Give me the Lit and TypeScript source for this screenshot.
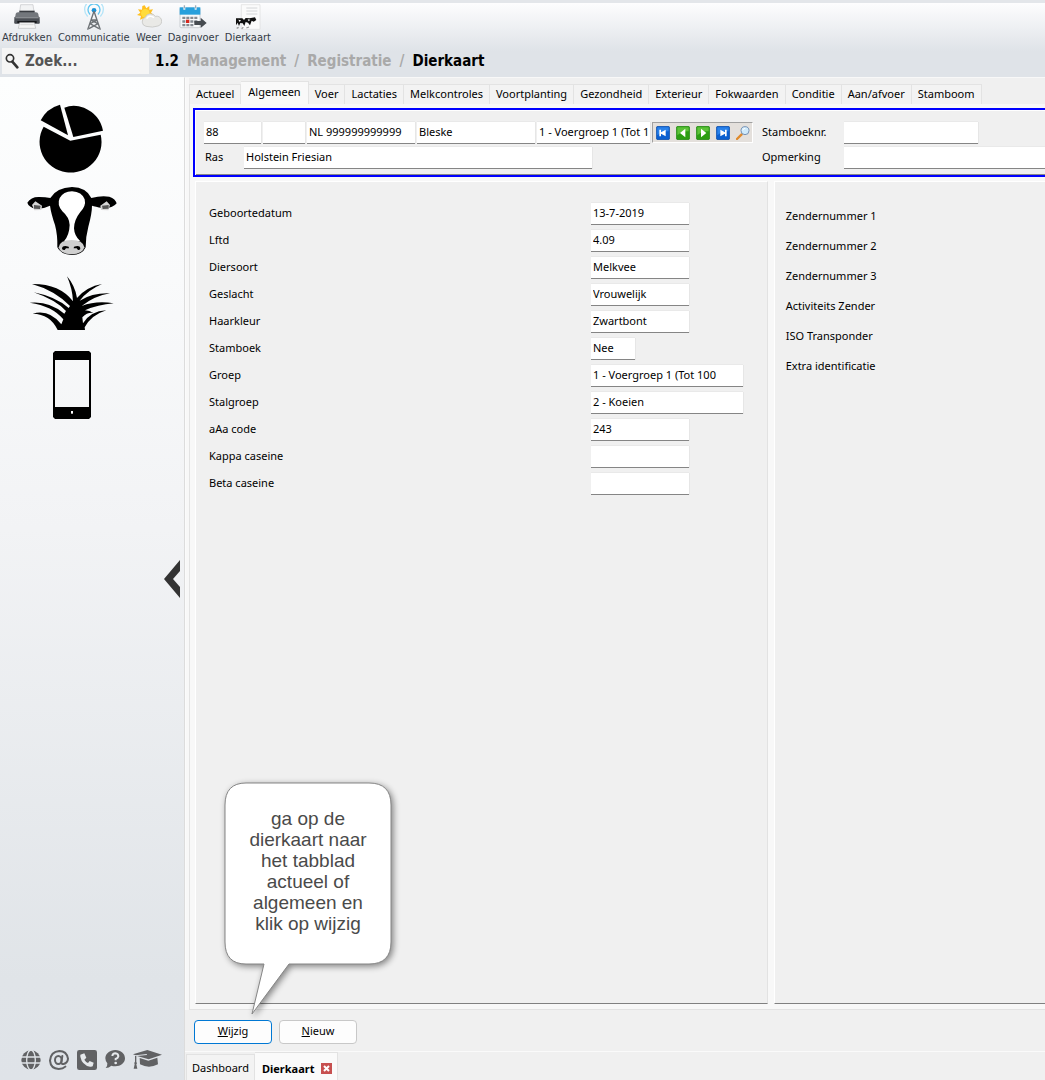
import { LitElement, html, svg, css } from "lit";
import { customElement, state } from "lit/decorators.js";

const printer = svg`<svg viewBox="0 0 78 78" width="26" height="26" aria-hidden="true">
  <path d="M20 2H57L60 24H17Z" fill="#f2f3f4" stroke="#c4c6c8" stroke-width="2"/>
  <rect x="16" y="20" width="46" height="7" fill="#3a3d42"/>
  <path d="M5 30Q6 25 12 25H66Q72 25 73 30L77 58H1Z" fill="#73777c"/>
  <rect x="1" y="38" width="76" height="21" rx="3" fill="#4b4f55"/>
  <rect x="4" y="38" width="70" height="5" fill="#898d91"/>
  <rect x="10" y="51" width="58" height="6" fill="#17191c"/>
  <path d="M17 56H61L65 73H13Z" fill="#f7f7f7" stroke="#b9bbbd" stroke-width="2"/>
  <path d="M19 62H59" stroke="#c9cacc" stroke-width="2"/></svg>`;
const antenna = svg`<svg viewBox="0 0 78 78" width="26" height="26" aria-hidden="true">
  <g fill="none" stroke-linecap="round" stroke-width="4">
  <path d="M19 36A28 28 0 1 1 59 36" stroke="#b4e4f8"/>
  <path d="M26 30A18 18 0 1 1 52 30" stroke="#62c6f0"/></g>
  <circle cx="39" cy="19" r="7" fill="#1c93d6"/>
  <path d="M39 22L20 77M39 22L58 77M31 48H47M27 59L50 48M51 59L28 48M24 74L51 59M54 74L27 59" fill="none" stroke="#6d7276" stroke-width="4"/></svg>`;
const weather = svg`<svg viewBox="0 0 78 78" width="26" height="26" aria-hidden="true">
  <path d="M26 4L31 13L40 6L40 17L51 16L45 26L53 33L43 37L46 48L35 44L28 52L23 43L12 47L15 36L3 33L13 26L6 16L18 17L19 6Z" fill="#ffc021"/>
  <circle cx="28" cy="28" r="13" fill="#ffdc3c"/>
  <path d="M30 67A14 14 0 0 1 28 40A17 17 0 0 1 58 37A14 14 0 0 1 66 66Q50 72 30 67Z" fill="#e9e9e6" stroke="#bdbdb9" stroke-width="2"/>
  <path d="M32 44Q40 31 54 41" stroke="#fff" stroke-width="5" fill="none"/></svg>`;
const calendar = svg`<svg viewBox="0 0 84 78" width="28" height="26" aria-hidden="true">
  <rect x="3" y="12" width="60" height="59" rx="3" fill="#f7f9fa" stroke="#b6bcc2" stroke-width="2"/>
  <path d="M2 10H64V32H2Z" fill="#27a0dc"/>
  <path d="M16 4V17M50 4V17" stroke="#e8f1f7" stroke-width="6"/><path d="M16 4V13M50 4V13" stroke="#66717c" stroke-width="2"/>
  <g fill="#858b92"><path d="M10 38h9v7h-9zM22 38h9v7h-9zM34 38h9v7h-9zM46 38h9v7h-9zM10 49h9v7h-9zM34 49h9v7h-9zM46 49h9v7h-9zM10 60h9v7h-9zM22 60h9v7h-9zM34 60h9v7h-9z"/></g>
  <rect x="21" y="47" width="10" height="10" fill="#d6281e"/>
  <path d="M46 51H65V41L83 57L65 72V63H46Z" fill="#464b50"/></svg>`;
const animalCard = svg`<svg viewBox="0 0 78 78" width="26" height="26" aria-hidden="true">
  <path d="M19 2H75V76H19Z" fill="#fbfbfb" stroke="#dcdcdc" stroke-width="2"/>
  <path d="M34 12H67M34 21H67M34 30H67" stroke="#d4d6d8" stroke-width="3"/>
  <path d="M3 43H22L27 48L32 42L44 43L60 40L64 48L56 53L50 50L45 64L39 56L32 54L28 66L23 58L16 57L12 66L8 56L3 64Z" fill="#111"/>
  <path d="M10 47l8 2l-4 5zM38 46l8 1l-5 5z" fill="#fff"/>
  <path d="M5 73l6-3M20 74l5-4M34 72l8-3" stroke="#999" stroke-width="4"/></svg>`;
const magnifier = svg`<svg viewBox="0 0 42 48" width="14" height="16" aria-hidden="true">
  <circle cx="15" cy="16" r="11" fill="none" stroke="#333" stroke-width="5"/>
  <path d="M22 26L37 43" stroke="#333" stroke-width="8" stroke-linecap="round"/></svg>`;

const pie = svg`<svg viewBox="117 42 195 210" width="65" height="70" aria-hidden="true">
  <path d="M131 110L211 152L302 134A93 92 0 1 1 131 110Z"/>
  <path d="M193 53Q220 42 252 53Q300 74 309 122L220 141Z"/>
  <path d="M122 91Q140 55 180 44L204 136Z"/></svg>`;
const cow = svg`<svg viewBox="78 288 270 210" width="90" height="70" aria-hidden="true">
  <path d="M148 324Q166 293 213 291Q256 292 271 324Q300 316 325 320Q344 327 347 340Q334 357 304 354Q282 350 273 347Q273 370 262 410Q254 440 254 472Q244 495 212 495Q179 494 169 472Q170 435 162 405Q150 370 147 347Q128 357 105 356Q83 352 79 338Q90 320 115 321Q133 321 148 324Z"/>
  <path d="M213 304Q243 306 251 328Q256 348 238 366Q219 390 219 415Q220 438 238 454H189Q205 435 206 405Q205 382 184 364Q167 344 176 324Q187 305 213 304Z" fill="#fff"/>
  <path d="M173 472Q176 450 212 450Q246 450 250 472Q246 492 212 493Q177 492 173 472Z" fill="#cfcfcf"/>
  <path d="M183 474Q185 465 203 470L204 475L195 475L191 480Q182 481 183 474ZM238 474Q237 465 219 470L218 475L227 475L231 480Q239 481 238 474Z"/>
  <path d="M93 345L103 334L123 347L121 360L100 361ZM327 345L317 334L298 347L300 360L322 361Z" fill="#d6d6d6"/>
  <path d="M99 345L119 347L117 357L99 356ZM323 345L303 347L305 357L323 356Z" fill="#555"/></svg>`;
const grass = svg`<svg viewBox="84 48 255 162" width="85" height="54" aria-hidden="true">
  <path d="M170 210Q148 162 95 161Q145 147 181 193L187 178Q155 138 86 128Q145 122 190 161L195 153Q163 119 98 97Q164 110 203 144L207 138Q161 91 93 72Q176 71 216 124Q214 85 198 49Q222 77 228 114Q257 80 303 72Q261 90 236 122Q275 98 327 100Q280 108 242 138Q286 121 338 130Q290 134 252 151Q266 151 277 159Q260 156 244 172L246 190Q269 153 316 151Q271 165 251 202L252 210Z"/></svg>`;
const phone = svg`<svg viewBox="0 0 114 204" width="38" height="68" aria-hidden="true">
  <path fill-rule="evenodd" d="M6 0H108L114 6V198L108 204H6L0 198V6ZM6 27V168H108V27Z"/>
  <rect x="54" y="180" width="6" height="8" fill="#fff"/></svg>`;

const globe = svg`<svg viewBox="0 0 60 60" width="20" height="20" aria-hidden="true">
  <circle cx="30" cy="30" r="29" fill="#616264"/>
  <g fill="none" stroke="#e0e4e8" stroke-width="4"><ellipse cx="30" cy="30" rx="13" ry="30"/><path d="M0 21H60M0 39H60"/></g></svg>`;
const at = svg`<svg viewBox="0 0 60 60" width="20" height="20" aria-hidden="true">
  <g fill="none" stroke="#616264" stroke-width="6" stroke-linecap="round"><ellipse cx="28" cy="30" rx="10" ry="12"/>
  <path d="M40 18L37 36Q37 43 44 42Q56 39 57 26Q53 3 31 3Q5 5 3 32Q5 56 29 57Q42 57 49 50"/></g></svg>`;
const call = svg`<svg viewBox="0 0 60 60" width="20" height="20" aria-hidden="true">
  <rect width="60" height="60" rx="7" fill="#616264"/>
  <path d="M10 14L22 10L28 23L22 29Q26 36 33 39L38 33L50 38L47 49Q44 51 39 50Q15 45 10 20Z" fill="#e6e9ec"/></svg>`;
const help = svg`<svg viewBox="0 0 60 60" width="20" height="20" aria-hidden="true">
  <path d="M31 0C48 0 60 11 60 25C60 39 47 49 31 49Q24 49 19 47Q12 54 2 54Q8 48 7 40Q1 33 1 25C1 11 14 0 31 0Z" fill="#616264"/>
  <path d="M22 18Q23 10 31 10Q40 11 40 19Q39 24 32 27V31" fill="none" stroke="#e6e9ec" stroke-width="6"/><circle cx="32" cy="39" r="4" fill="#e6e9ec"/></svg>`;
const cap = svg`<svg viewBox="0 0 87 60" width="29" height="20" aria-hidden="true">
  <path d="M43 0L87 14L47 28L12 18L42 15L41 12L8 16L0 13ZM20 24L46 32L73 23L75 43Q48 57 21 43ZM6 18H10V36Q14 40 10 43L13 56H2L5 43Q2 39 6 35Z" fill="#616264"/></svg>`;

const navIcon = (kind: string) => {
  if (kind === "zoek") {
    return svg`<svg viewBox="0 0 42 42" width="14" height="14" aria-hidden="true">
      <path d="M3 39L17 25" stroke="#e08a2c" stroke-width="7" stroke-linecap="round"/>
      <circle cx="27" cy="14" r="12" fill="#cfeafb" stroke="#7793b5" stroke-width="3"/>
      <path d="M20 13Q22 7 28 7" stroke="#fff" stroke-width="3" fill="none"/></svg>`;
  }
  const blue = kind === "eerste" || kind === "laatste";
  const glyph: Record<string, string> = {
    eerste: "M10 11H15V19L29 11V31L15 23V31H10Z",
    vorige: "M28 8V34L12 21Z",
    volgende: "M15 8V34L31 21Z",
    laatste: "M32 11H27V19L13 11V31L27 23V31H32Z",
  };
  return svg`<svg viewBox="0 0 42 42" width="14" height="14" aria-hidden="true">
    <rect x="1" y="1" width="40" height="40" rx="5" fill=${blue ? "#0a5fd0" : "#2b9e12"} stroke=${blue ? "#0a48a0" : "#1e8210"} stroke-width="2"/>
    <path d="M4 4H38V16Q20 14 4 28Z" fill=${blue ? "#2a82ea" : "#5cc238"}/>
    <path d=${glyph[kind]} fill="#fff"/></svg>`;
};

const TOOLS = [
  ["Afdrukken", printer],
  ["Communicatie", antenna],
  ["Weer", weather],
  ["Daginvoer", calendar],
  ["Dierkaart", animalCard],
] as const;

const TABS = ["Actueel", "Algemeen", "Voer", "Lactaties", "Melkcontroles", "Voortplanting", "Gezondheid",
  "Exterieur", "Fokwaarden", "Conditie", "Aan/afvoer", "Stamboom"];

const FIELDS = [
  ["Geboortedatum", "13-7-2019", "medium"],
  ["Lftd", "4.09", "medium"],
  ["Diersoort", "Melkvee", "medium"],
  ["Geslacht", "Vrouwelijk", "medium"],
  ["Haarkleur", "Zwartbont", "medium"],
  ["Stamboek", "Nee", "short"],
  ["Groep", "1 - Voergroep 1 (Tot 100", "long"],
  ["Stalgroep", "2 - Koeien", "long"],
  ["aAa code", "243", "medium"],
  ["Kappa caseine", "", "medium"],
  ["Beta caseine", "", "medium"],
];

const TRANSPONDERS = ["Zendernummer 1", "Zendernummer 2", "Zendernummer 3", "Activiteits Zender",
  "ISO Transponder", "Extra identificatie"];

@customElement("app-root")
export class AppRoot extends LitElement {
  @state() private tab = "Algemeen";

  static styles = css`
    :host {
      display: flex;
      flex-direction: column;
      min-height: 100vh;
      overflow: hidden;
      font: 11px/16px "Noto Sans", "Open Sans", sans-serif;
      color: #000;
    }
    *, *::before, *::after { box-sizing: border-box; }
    button, input { font: inherit; color: inherit; margin: 0; border-radius: 0; }
    button { background: none; border: 0; padding: 0; }
    a { color: inherit; text-decoration: none; }
    svg { display: block; flex: none; }

    .top {
      background: linear-gradient(#fdfdfe 0, #dfe3e8 48px);
      border-top: 3px solid #e3e6ea;
      height: 77px;
    }
    .tools { display: flex; gap: 6px; padding: 1px 2px 0; height: 45px; }
    .tool {
      display: flex;
      flex-direction: column;
      align-items: center;
      font: 11px/14px "DejaVu Sans Condensed", "Noto Sans", sans-serif;
      color: #333b46;
    }
    .tool svg { margin-bottom: 1px; }
    .bar {
      display: flex;
      align-items: center;
      height: 26px;
      padding-left: 2px;
      font: bold 15px/24px "DejaVu Sans Condensed", "Noto Sans", sans-serif;
    }
    .search { display: flex; align-items: center; gap: 6px; width: 147px; height: 26px; padding-left: 3px; background: #f5f5f5; }
    .search input { flex: 1; min-width: 0; border: 0; padding: 0; background: none; outline: 0; }
    .search input::placeholder { color: #555; opacity: 1; }
    .crumbs { display: flex; gap: 8px; padding-left: 6px; color: #a9a9a9; }
    .crumbs .dark { color: #000; }
    .version { color: #000; }

    .body { display: flex; flex: 1; }
    .side {
      display: flex;
      flex-direction: column;
      flex: none;
      width: 184px;
      background: linear-gradient(#fdfefe 0, #f9fafb 20%, #f2f3f5 45%, #e0e4e8 90%, #dfe3e8);
    }
    .modules { display: flex; flex: 1 1 0; flex-direction: column; gap: 12px; width: 143px; padding-top: 27px; }
    .modules a { display: flex; align-items: center; justify-content: center; height: 70px; }
    .links { display: flex; flex: 1 1 0; align-items: flex-end; gap: 8px; padding: 0 0 10px 21px; }
    .fold { align-self: flex-end; margin-bottom: 17px; padding-right: 4px; }

    .main {
      display: flex;
      flex-direction: column;
      flex: 1;
      min-width: 0;
      background: #f0f0f0;
      border-left: 1px solid #dcdcdc;
      border-top: 1px solid #f8f8f8;
    }
    .work {
      position: relative;
      display: flex;
      flex-direction: column;
      flex: 1;
      padding-left: 3px;
      border-left: 1px solid #fbfbfb;
      background: #f8f8f8;
    }
    .tabs { display: flex; align-items: flex-end; height: 26px; background: #f0f0f0; }
    .tab { height: 20px; padding: 0 6px 2px; border: 1px solid #e3e3e3; border-left-width: 0; border-bottom: 0; background: #f3f3f3; white-space: nowrap; }
    .tab:first-child { border-left-width: 1px; }
    .tab[aria-selected="true"] { height: 23px; padding: 0 7px 2px; background: #f9f9f9; }
    .page { display: flex; flex-direction: column; flex: 1; padding: 4px 0 5px 3px; border: 1px solid #e3e3e3; border-width: 0 0 1px 1px; }

    .card {
      display: grid;
      grid-template-columns: 549px 91px minmax(0, 1fr);
      row-gap: 3px;
      align-items: center;
      margin-bottom: 4px;
      padding: 12px 0 6px 9px;
      border: 2px solid #00f;
      border-right: 0;
      box-shadow: inset 1px 1px #fff, inset 0 -1px #888;
      background: #f0f0f0;
    }
    .ident { display: flex; gap: 2px; }
    .ident label { width: 38px; padding-left: 1px; line-height: 20px; }
    .card > label { padding: 0 0 2px 9px; line-height: 20px; }
    .box {
      display: block;
      height: 22px;
      min-width: 0;
      padding: 0 2px 2px;
      border: 0;
      border-bottom: 1px solid #858585;
      background: #fff;
      box-shadow: 1px 0 #e6e6e6, 0 -1px #e9e9e9;
      outline: 0;
    }
    .number { width: 57px; }
    .suffix { width: 42px; }
    .earmark { width: 108px; }
    .name { width: 118px; }
    .group { width: 113px; }
    .breed { width: 348px; }
    .herdbook { width: 134px; }
    .note { width: 100%; }
    .short { width: 44px; }
    .medium { width: 98px; }
    .long { width: 152px; }
    .steps {
      display: flex;
      align-items: center;
      gap: 6px;
      width: 101px;
      height: 21px;
      padding-left: 3px;
      border: 1px solid #a0a0a0;
      border-color: #a0a0a0 #fff #fff #a0a0a0;
      background: #e4e0dc;
    }

    .panels { display: grid; grid-template-columns: 19fr 9fr; gap: 6px; flex: 1; padding-left: 2px; }
    .panel { background: #f0f0f0; border: 1px solid #fff; border-right-color: #e2e2e2; border-bottom-color: #808080; }
    .form { display: grid; grid-template-columns: 7fr 3fr; align-content: start; row-gap: 5px; padding: 21px 12px 0 13px; }
    .form label { line-height: 20px; }
    .ids { display: flex; flex-direction: column; gap: 14px; margin: 0; padding: 26px 10px 0 11px; border-right: 0; list-style: none; white-space: nowrap; }

    .actions { display: flex; gap: 7px; padding: 10px 0 7px 9px; }
    .action { width: 78px; height: 24px; padding-bottom: 2px; border: 1px solid #c8c8c8; border-radius: 4px; background: #fdfdfd; }
    .primary { border-color: #0078d4; }

    .windows { display: flex; align-items: flex-end; height: 29px; padding-left: 1px; border-top: 1px solid #fafafa; }
    .window { display: flex; align-items: center; gap: 7px; height: 26px; padding: 0 5px; border: 1px solid #e2e2e2; border-bottom: 0; background: #f3f3f3; }
    .window.active { height: 28px; padding: 4px 5px 0 7px; border-left: 0; background: #fafafa; font-weight: bold; }
    .close { display: grid; place-items: center; width: 11px; height: 11px; background: #c75050; }

    .callout { position: absolute; left: 38px; bottom: -6px; width: 168px; height: 234px; color: #4a4a4a; font: 19px/21px "Liberation Sans", Arial, sans-serif; text-align: center; }
    .callout svg { position: absolute; left: 0; top: 0; overflow: visible; filter: drop-shadow(2px 2px 3px rgba(0, 0, 0, 0.45)); }
    .callout p { position: relative; margin: 0; padding-top: 26px; }
  `;

  render() {
    return html`
      <header class="top">
        <div class="tools">
          ${TOOLS.map(([name, icon]) => html`<button class="tool">${icon}<span>${name}</span></button>`)}
        </div>
        <div class="bar">
          <label class="search">${magnifier}<input type="search" placeholder="Zoek..." aria-label="Zoek" /></label>
          <nav class="crumbs">
            <span class="version">1.2</span>
            <a href="#management">Management</a><span>/</span>
            <a href="#registratie">Registratie</a><span>/</span>
            <a class="dark" href="#dierkaart">Dierkaart</a>
          </nav>
        </div>
      </header>
      <div class="body">
        <aside class="side">
          <nav class="modules">
            <a href="#management" aria-label="Management">${pie}</a>
            <a href="#dieren" aria-label="Dieren">${cow}</a>
            <a href="#grasland" aria-label="Grasland">${grass}</a>
            <a href="#mobiel" aria-label="Mobiel">${phone}</a>
          </nav>
          <button class="fold" aria-label="Menu inklappen">
            <svg viewBox="0 0 16 38" width="16" height="38"><path d="M16 0V11L9 19L16 27V38L0 19Z" fill="#333" /></svg>
          </button>
          <nav class="links">
            <a href="#web" aria-label="Website">${globe}</a>
            <a href="#mail" aria-label="E-mail">${at}</a>
            <a href="#telefoon" aria-label="Telefoon">${call}</a>
            <a href="#help" aria-label="Help">${help}</a>
            <a href="#cursus" aria-label="Cursus">${cap}</a>
          </nav>
        </aside>
        <main class="main">
          <section class="work">
            <div class="tabs" role="tablist">
              ${TABS.map((t) => html`<button class="tab" role="tab" aria-selected=${t === this.tab ? "true" : "false"}
                @click=${() => (this.tab = t)}>${t}</button>`)}
            </div>
            <div class="page">
              <div class="card">
                <div class="ident">
                  <input class="box number" aria-label="Nummer" .value=${"88"} />
                  <input class="box suffix" aria-label="Toevoeging" />
                  <input class="box earmark" aria-label="Levensnummer" .value=${"NL 999999999999"} />
                  <input class="box name" aria-label="Naam" .value=${"Bleske"} />
                  <input class="box group" aria-label="Voergroep" .value=${"1 - Voergroep 1 (Tot 100"} />
                  <div class="steps">
                    ${["eerste", "vorige", "volgende", "laatste", "zoek"].map((k) => html`<button aria-label=${k}>${navIcon(k)}</button>`)}
                  </div>
                </div>
                <label for="herdbook">Stamboeknr.</label>
                <input id="herdbook" class="box herdbook" />
                <div class="ident">
                  <label for="breed">Ras</label>
                  <input id="breed" class="box breed" .value=${"Holstein Friesian"} />
                </div>
                <label for="note">Opmerking</label>
                <input id="note" class="box note" />
              </div>
              <div class="panels">
                <div class="panel form">
                  ${FIELDS.map(([label, value, size], i) => html`
                    <label for="f${i}">${label}</label>
                    <input id="f${i}" class="box ${size}" .value=${value} />`)}
                </div>
                <ul class="panel ids">${TRANSPONDERS.map((t) => html`<li>${t}</li>`)}</ul>
              </div>
            </div>
            <div class="callout" role="note">
              <svg viewBox="0 0 168 234" width="168" height="234" aria-hidden="true">
                <path d="M22 1H145Q167 1 167 23V160Q167 182 145 182H65L28 232L40 182H22Q1 182 1 160V23Q1 1 22 1Z" fill="#fff" stroke="#858585" />
              </svg>
              <p>ga op de<br />dierkaart naar<br />het tabblad<br />actueel of<br />algemeen en<br />klik op wijzig</p>
            </div>
          </section>
          <div class="actions">
            <button class="action primary"><u>W</u>ijzig</button>
            <button class="action"><u>N</u>ieuw</button>
          </div>
          <div class="windows">
            <a class="window" href="#dashboard">Dashboard</a>
            <div class="window active">
              <span>Dierkaart</span>
              <button class="close" aria-label="Sluiten">
                <svg viewBox="0 0 11 11" width="11" height="11"><path d="M3 3L8 8M8 3L3 8" stroke="#fff" stroke-width="2" /></svg>
              </button>
            </div>
          </div>
        </main>
      </div>
    `;
  }
}
